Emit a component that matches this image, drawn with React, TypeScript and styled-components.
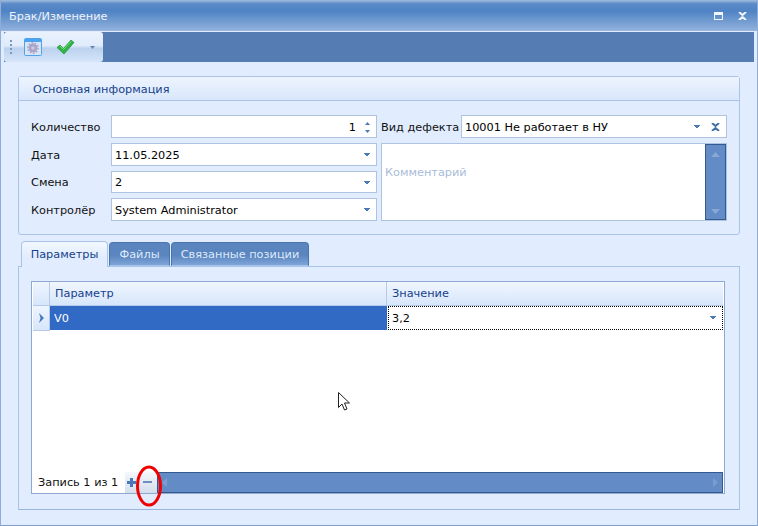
import React, {FC} from 'react';
import styled, {createGlobalStyle} from 'styled-components';

const GlobalStyle = createGlobalStyle`
    html, body {
        margin: 0;
        padding: 0;
        background: #e1edfe;
    }
    body {
        font-family: "DejaVu Sans", "Liberation Sans", sans-serif;
        font-size: 11.3px;
    }
`;

const Window = styled.div`
    position: relative;
    width: 758px;
    height: 526px;
    box-sizing: border-box;
    overflow: hidden;
    display: flex;
    flex-direction: column;
    background: #e1edfe;
    border: 1px solid #8fadd8;
    border-top: 0;
    border-bottom-color: #7f9fce;
`;

const TitleBar = styled.div`
    height: 31px;
    flex: none;
    margin: 0 -1px;
    padding: 0 11px 0 9px;
    display: flex;
    align-items: center;
    justify-content: space-between;
    color: #eef4fc;
    box-sizing: border-box;
    background: linear-gradient(#a3bfe2 0, #7ba0d0 2px, #5a8ac8 4px, #4f83c4 11px, #6e99cf 20px, #8fb0dc 30px, #9dbbe3 31px);
`;

const TitleText = styled.span`
    margin-top: 1px;
`;

const WindowButtons = styled.div`
    display: flex;
    align-items: center;
    gap: 15px;
`;

const ToolBand = styled.div`
    height: 30px;
    flex: none;
    margin: 1px 3px 0;
    background: #557db4;
    display: flex;
`;

const ToolStrip = styled.div`
    width: 99px;
    box-sizing: border-box;
    display: flex;
    align-items: center;
    padding-left: 6px;
    background: linear-gradient(#eaf2fd 0, #e0ebfb 45%, #bcd2ef 55%, #d6e5f9 100%);
    border-radius: 3px;
`;

const Grip = styled.div`
    display: flex;
    flex-direction: column;
    gap: 2px;
    margin-right: 12px;
    span {
        width: 2px;
        height: 2px;
        background: #7f97bb;
    }
`;

const ToolIcon = styled.div<{$gap: number}>`
    display: flex;
    margin-right: ${p => p.$gap}px;
`;

const Content = styled.div`
    flex: 1;
    min-height: 0;
    padding: 14px 17px 15px 17px;
    display: flex;
    flex-direction: column;
`;

const Group = styled.div`
    height: 159px;
    flex: none;
    box-sizing: border-box;
    border: 1px solid #a9c4e8;
    border-radius: 3px;
    display: flex;
    flex-direction: column;
`;

const GroupHeader = styled.div`
    height: 24px;
    flex: none;
    box-sizing: border-box;
    padding: 1px 0 0 14px;
    display: flex;
    align-items: center;
    color: #15428b;
    background: linear-gradient(#edf4fe, #d9e7fb);
    border-bottom: 1px solid #a9c4e8;
`;

const Form = styled.div`
    padding: 14px 12px 0 12px;
    display: grid;
    grid-template-columns: 80px 266px 84px 266px;
    grid-template-rows: 23px 23px 22px 23px;
    row-gap: 5px;
    color: #111;
`;

const Label = styled.div<{$left?: boolean}>`
    display: flex;
    align-items: center;
    padding-top: 1px;
    padding-left: ${p => p.$left ? 4 : 0}px;
    white-space: nowrap;
`;

const Field = styled.div`
    box-sizing: border-box;
    display: flex;
    align-items: center;
    background: #fff;
    border: 1px solid #aec3e1;
    padding: 1px 6px 0 3px;
    color: #000;
`;

const FieldValue = styled.span<{$right?: boolean}>`
    flex: 1;
    white-space: nowrap;
    text-align: ${p => p.$right ? 'right' : 'left'};
`;

const ClearIcon = styled.svg`
    margin-left: 11px;
`;

const Comment = styled.div`
    grid-column: 3 / 5;
    grid-row: 2 / 5;
    margin-left: 4px;
    box-sizing: border-box;
    display: flex;
    background: #fff;
    border: 1px solid #aec3e1;
`;

const CommentText = styled.div`
    flex: 1;
    padding: 22px 0 0 3px;
    color: #a9bcd9;
`;

const VScroll = styled.div`
    width: 21px;
    flex: none;
    box-sizing: border-box;
    background: #638bc6;
    border: 1px solid #34598f;
    display: flex;
    flex-direction: column;
    justify-content: space-between;
    align-items: center;
    padding: 7px 0 5px;
`;

const Spinner = styled.div`
    display: flex;
    flex-direction: column;
    gap: 5px;
    margin-left: 9px;
`;

const TabRow = styled.div`
    display: flex;
    align-items: flex-end;
    height: 25px;
    margin-top: 6px;
    padding-left: 3px;
    gap: 1px;
    flex: none;
    position: relative;
    z-index: 1;
`;

const Tab = styled.div<{$active?: boolean; $width: number}>`
    width: ${p => p.$width}px;
    height: ${p => p.$active ? 26 : 24}px;
    box-sizing: border-box;
    display: flex;
    align-items: center;
    justify-content: center;
    border-radius: 4px 4px 0 0;
    border: 1px solid ${p => p.$active ? '#a9c4e8' : '#4a76b0'};
    border-bottom: ${p => p.$active ? '0' : '1px solid #a9c4e8'};
    color: ${p => p.$active ? '#15428b' : '#dfeafa'};
    background: ${p => p.$active
        ? 'linear-gradient(#f1f7ff, #e1edfe 60%)'
        : 'linear-gradient(#5a85bf, #5a85bf 55%, #7ea4d8 100%)'};
    margin-bottom: ${p => p.$active ? -1 : 0}px;
`;

const TabPanel = styled.div`
    flex: 1;
    min-height: 0;
    box-sizing: border-box;
    border: 1px solid #a9c4e8;
    border-bottom-color: #9ab5dd;
    padding: 14px 14px 15px 12px;
    display: flex;
`;

const Grid = styled.div`
    flex: 1;
    box-sizing: border-box;
    background: #fff;
    border: 1px solid #8fa9d0;
    padding: 0 1px 0;
    display: flex;
    flex-direction: column;
`;

const GridRow = styled.div<{$height: number}>`
    height: ${p => p.$height}px;
    flex: none;
    display: grid;
    grid-template-columns: 17px 337px 1fr;
`;

const HeaderCell = styled.div`
    box-sizing: border-box;
    display: flex;
    align-items: center;
    padding: 0 0 1px 5px;
    color: #15428b;
    background: linear-gradient(#f0f6ff, #d7e6fb);
    border-right: 1px solid #b5cae8;
    border-bottom: 1px solid #b5cae8;
    &:last-child {
        border-right: 0;
    }
`;

const Indicator = styled.div`
    box-sizing: border-box;
    display: flex;
    align-items: center;
    justify-content: center;
    background: linear-gradient(#eef5ff, #d7e6fb);
    border-right: 1px solid #b5cae8;
    border-bottom: 1px solid #b5cae8;
`;

const SelectedCell = styled.div`
    display: flex;
    align-items: center;
    padding-left: 4px;
    color: #fff;
    background: #316ac5;
    margin-bottom: 1px;
`;

const EditCell = styled.div`
    box-sizing: border-box;
    display: flex;
    align-items: center;
    justify-content: space-between;
    padding: 0 6px 0 3px;
    color: #000;
    border: 1px dotted #000;
    margin-left: 1px;
    margin-bottom: 1px;
`;

const GridBody = styled.div`
    flex: 1;
`;

const Footer = styled.div`
    height: 21px;
    flex: none;
    display: flex;
    align-items: stretch;
`;

const RecordText = styled.div`
    width: 87px;
    padding-left: 5px;
    display: flex;
    align-items: center;
    color: #111;
    white-space: nowrap;
`;

const NavBox = styled.div`
    width: 32px;
    flex: none;
    display: flex;
    align-items: center;
    padding-left: 2px;
    gap: 2px;
    box-sizing: border-box;
    background: linear-gradient(#f4f7fb, #d3deed);
`;

const RemoveIcon = styled.svg`
    margin-left: 4px;
`;

const HScroll = styled.div`
    flex: 1;
    box-sizing: border-box;
    background: #638bc6;
    border: 1px solid #34598f;
    display: flex;
    align-items: center;
    justify-content: space-between;
    padding: 0 4px;
`;

const RedMark = styled.svg`
    position: absolute;
    left: 132px;
    top: 464px;
`;

const Cursor = styled.svg`
    position: absolute;
    left: 336px;
    top: 391px;
`;

const Arrow: FC = () => (
    <svg width="6" height="4" viewBox="0 0 6 4"><path d="M0 0h6v1H5v1H4v1H2V2H1V1H0z" fill="#4a78b8" /></svg>
);

const Combo: FC<{value: string}> = ({value}) => (
    <Field>
        <FieldValue>{value}</FieldValue>
        <Arrow />
    </Field>
);

const App: FC = () => {
    return (
        <Window>
            <GlobalStyle />
            <TitleBar>
                <TitleText>Брак/Изменение</TitleText>
                <WindowButtons>
                    <svg width="9" height="8" viewBox="0 0 9 8"><path d="M0 0h9v8H0z M1 3v4h7V3z" fill="#f2f6fc" fillRule="evenodd" /></svg>
                    <svg width="9" height="8" viewBox="0 0 9 8"><path d="M1 0l3.500 3L8 0M1 8l3.500-3L8 8" stroke="#f2f6fc" strokeWidth="2" fill="none" /></svg>
                </WindowButtons>
            </TitleBar>
            <ToolBand>
                <ToolStrip>
                    <Grip><span /><span /><span /><span /></Grip>
                    <ToolIcon $gap={14}>
                        <svg width="18" height="18" viewBox="0 0 18 18">
                            <rect x="0.5" y="0.5" width="17" height="17" rx="1" fill="#d9e4f5" stroke="#4da3ee" />
                            <rect x="1" y="1" width="16" height="3" fill="#4da3ee" />
                            <circle cx="9" cy="10" r="4.500" fill="#a9a4c9" />
                            <circle cx="9" cy="10" r="5.200" fill="none" stroke="#a9a4c9" strokeWidth="1.400" strokeDasharray="1.600 1.600" />
                            <circle cx="9" cy="10" r="1.800" fill="#c9c6de" />
                        </svg>
                    </ToolIcon>
                    <ToolIcon $gap={15}>
                        <svg width="19" height="16" viewBox="0 0 19 16">
                            <path d="M1 8.500L4 6l3.500 3.500L15 1l3 2.500L8 15z" fill="#2fb344" stroke="#1f9435" strokeWidth="0.7" />
                            <path d="M4 7l3.500 3.500L15 2.500" stroke="#79dd7c" strokeWidth="1" fill="none" />
                        </svg>
                    </ToolIcon>
                    <svg width="5" height="3" viewBox="0 0 5 3"><path d="M0 0h5L2.500 3z" fill="#6a87b3" /></svg>
                </ToolStrip>
            </ToolBand>
            <Content>
                <Group>
                    <GroupHeader>Основная информация</GroupHeader>
                    <Form>
                        <Label>Количество</Label>
                        <Field>
                            <FieldValue $right>1</FieldValue>
                            <Spinner>
                                <svg width="5" height="3" viewBox="0 0 5 3"><path d="M0 3h5L2.500 0z" fill="#4a78b8" /></svg>
                                <svg width="5" height="3" viewBox="0 0 5 3"><path d="M0 0h5L2.500 3z" fill="#4a78b8" /></svg>
                            </Spinner>
                        </Field>
                        <Label $left>Вид дефекта</Label>
                        <Field>
                            <FieldValue>10001 Не работает в НУ</FieldValue>
                            <Arrow />
                            <ClearIcon width="9" height="8" viewBox="0 0 9 8"><path d="M1 0l3.500 3L8 0M1 8l3.500-3L8 8" stroke="#3f6ea8" strokeWidth="2" fill="none" /></ClearIcon>
                        </Field>
                        <Label>Дата</Label>
                        <Combo value="11.05.2025" />
                        <Comment>
                            <CommentText>Комментарий</CommentText>
                            <VScroll>
                                <svg width="9" height="5" viewBox="0 0 9 5"><path d="M0 5h9L4.500 0z" fill="#89a8d6" /></svg>
                                <svg width="9" height="5" viewBox="0 0 9 5"><path d="M0 0h9L4.500 5z" fill="#89a8d6" /></svg>
                            </VScroll>
                        </Comment>
                        <Label>Смена</Label>
                        <Combo value="2" />
                        <Label>Контролёр</Label>
                        <Combo value="System Administrator" />
                    </Form>
                </Group>
                <TabRow>
                    <Tab $active $width={87}>Параметры</Tab>
                    <Tab $width={61}>Файлы</Tab>
                    <Tab $width={138}>Связанные позиции</Tab>
                </TabRow>
                <TabPanel>
                    <Grid>
                        <GridRow $height={24}>
                            <Indicator />
                            <HeaderCell>Параметр</HeaderCell>
                            <HeaderCell>Значение</HeaderCell>
                        </GridRow>
                        <GridRow $height={25}>
                            <Indicator>
                                <svg width="7" height="10" viewBox="0 0 7 10"><path d="M1 0l5 5-5 5 1.500-5z" fill="#4a78b8" /></svg>
                            </Indicator>
                            <SelectedCell>V0</SelectedCell>
                            <EditCell>3,2<Arrow /></EditCell>
                        </GridRow>
                        <GridBody />
                        <Footer>
                            <RecordText>Запись 1 из 1</RecordText>
                            <NavBox>
                                <svg width="9" height="9" viewBox="0 0 9 9"><path d="M3 0h3v3h3v3H6v3H3V6H0V3h3z" fill="#4a78b8" /></svg>
                                <RemoveIcon width="11" height="9" viewBox="0 0 11 9"><path d="M1 3h9v2H1z" fill="#6c8fbf" /></RemoveIcon>
                            </NavBox>
                            <HScroll>
                                <svg width="5" height="9" viewBox="0 0 5 9"><path d="M5 0v9L0 4.500z" fill="#7b9dd0" /></svg>
                                <svg width="5" height="9" viewBox="0 0 5 9"><path d="M0 0v9l5-4.500z" fill="#7b9dd0" /></svg>
                            </HScroll>
                        </Footer>
                    </Grid>
                </TabPanel>
            </Content>
            <RedMark width="32" height="44" viewBox="0 0 32 44">
                <ellipse cx="16" cy="22" rx="11.500" ry="19" fill="none" stroke="#f00000" strokeWidth="3" />
            </RedMark>
            <Cursor width="14" height="22" viewBox="0 0 14 22">
                <path d="M1.500 1.500v15l3.500-3.500 2.500 6 2.500-1-2.500-6h5z" fill="#fff" stroke="#222" strokeWidth="1" />
            </Cursor>
        </Window>
    );
};

export default App;
